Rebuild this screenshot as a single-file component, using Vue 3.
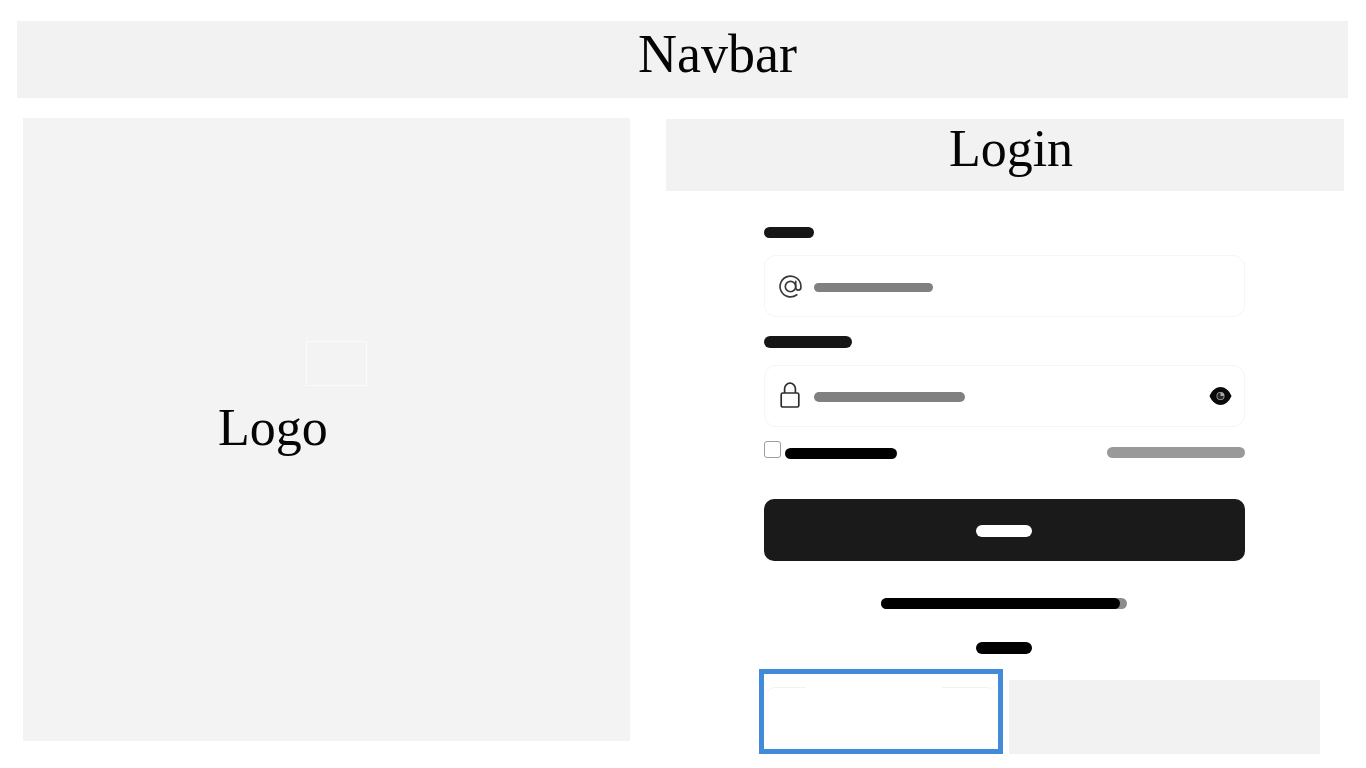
<script setup>
</script>

<template>
  <div class="page">
    <header class="navbar">Navbar</header>
    <main class="content">
      <section class="logo-panel">
        <span class="logo-text">Logo</span>
        <span class="logo-outline"></span>
      </section>
      <section class="login-col">
        <div class="login-head">Login</div>
        <form class="form" @submit.prevent>
          <div class="bar label label-a"></div>
          <div class="input">
            <svg class="icon-at" viewBox="0 0 24 24" fill="none" stroke="#3a3a3a" stroke-width="1.6" stroke-linecap="round" stroke-linejoin="round">
              <circle cx="12" cy="12" r="5" />
              <path d="M17 7v6a2.500 2.500 0 0 0 5 0v-1a10 10 0 1 0-3.920 7.940" />
            </svg>
            <div class="bar ph ph-a"></div>
          </div>
          <div class="bar label label-b"></div>
          <div class="input">
            <svg class="icon-lock" viewBox="0 0 20 26" fill="none" stroke="#2e2e2e" stroke-width="1.7" stroke-linejoin="round">
              <rect x="1.200" y="11" width="17.600" height="14" rx="1.600" />
              <path d="M4.600 11V6.600a5.400 5.400 0 0 1 10.800 0V11" />
            </svg>
            <div class="bar ph ph-b"></div>
            <svg class="icon-eye" viewBox="0 0 22 18">
              <path d="M0 9C2.500 3 7 0 11 0s8.500 3 11 9c-2.500 6-7 9-11 9S2.500 15 0 9z" fill="#0a0a0a" />
              <circle cx="11" cy="9" r="4" fill="#a8a8a8" />
              <path d="M11 5.800a3.200 3.200 0 1 0 3.200 3.200H11z" fill="#262626" />
            </svg>
          </div>
          <div class="options">
            <span class="check"></span>
            <div class="bar remember"></div>
            <div class="bar forgot"></div>
          </div>
          <button class="submit" type="submit"><span class="bar submit-text"></span></button>
          <div class="bar signup"><span class="signup-end"></span></div>
          <div class="bar or"></div>
          <div class="socials">
            <div class="selected"><div class="selected-inner"></div></div>
            <div class="placeholder"></div>
          </div>
        </form>
      </section>
    </main>
  </div>
</template>

<style>
html, body { background: #fff; overflow: hidden; }
</style>

<style scoped>
.page {
  width: 1366px;
  height: 768px;
  box-sizing: border-box;
  padding: 21px 18px 0 17px;
  background: #fff;
  font-family: "Liberation Serif", "Times New Roman", serif;
  color: #050505;
}
.navbar {
  height: 77px;
  box-sizing: border-box;
  padding: 0 0 12px 70px;
  background: #f2f2f2;
  display: flex;
  align-items: center;
  justify-content: center;
  font-size: 54px;
}
.content {
  display: flex;
  align-items: flex-start;
  gap: 36px;
  margin-top: 20px;
  padding-left: 6px;
}
.logo-panel {
  position: relative;
  flex: 0 0 607px;
  height: 623px;
  box-sizing: border-box;
  padding: 0 107px 5px 0;
  background: #f3f3f3;
  display: flex;
  align-items: center;
  justify-content: center;
  font-size: 52px;
}
.logo-outline {
  position: absolute;
  left: 283px;
  top: 223px;
  width: 61px;
  height: 45px;
  box-sizing: border-box;
  border: 1px solid #fbfbfb;
}
.login-col {
  flex: 0 0 678px;
  margin-top: 1px;
}
.login-head {
  height: 72px;
  box-sizing: border-box;
  padding: 0 0 14px 12px;
  background: #f2f2f2;
  display: flex;
  align-items: center;
  justify-content: center;
  font-size: 52px;
}
.form {
  display: flex;
  flex-direction: column;
  width: 481px;
  margin-left: 98px;
  padding-top: 36px;
}
.bar {
  border-radius: 6px;
  filter: blur(0.5px);
}
.label { background: #161616; }
.label-a { width: 50px; height: 11px; margin-bottom: 17px; }
.label-b { width: 88px; height: 12px; margin-top: 19px; margin-bottom: 17px; }
.input {
  height: 62px;
  box-sizing: border-box;
  border: 1px solid #f5f5f5;
  border-radius: 12px;
  display: flex;
  align-items: center;
  padding-left: 13px;
}
.icon-at { width: 25px; height: 25px; margin-right: 11px; filter: blur(0.3px); }
.icon-lock { width: 20px; height: 26px; margin: 0 14px 2px 2px; filter: blur(0.3px); }
.icon-eye { width: 23px; height: 18px; margin-left: auto; margin-right: 12px; filter: blur(0.3px); }
.ph { background: #808080; margin-top: 2px; }
.ph-a { width: 119px; height: 9px; }
.ph-b { width: 151px; height: 10px; }
.options {
  display: flex;
  align-items: flex-end;
  height: 18px;
  margin-top: 14px;
}
.check {
  width: 17px;
  height: 17px;
  box-sizing: border-box;
  align-self: flex-start;
  border: 1.500px solid #9c9c9c;
  border-radius: 3px;
  margin-right: 4px;
}
.remember { width: 112px; height: 11px; background: #000; }
.forgot { width: 138px; height: 11px; margin-left: auto; margin-bottom: 1px; background: #999; }
.submit {
  height: 62px;
  margin-top: 40px;
  padding: 0;
  border: 0;
  border-radius: 10px;
  background: #1a1a1a;
  display: flex;
  align-items: center;
  justify-content: center;
}
.submit-text { width: 56px; height: 12px; margin: 2px 2px 0 0; background: #fff; }
.signup {
  position: relative;
  align-self: flex-start;
  width: 246px;
  height: 11px;
  margin-top: 37px;
  margin-left: 117px;
  background: #8c8c8c;
}
.signup-end {
  position: absolute;
  left: 0;
  top: 0;
  width: 239px;
  height: 100%;
  border-radius: 6px;
  background: #000;
}
.or {
  align-self: center;
  width: 56px;
  height: 12px;
  margin: 33px 2px 0 0;
  background: #000;
}
.socials {
  display: flex;
  align-items: flex-end;
  gap: 6px;
  margin-top: 15px;
  margin-left: -5px;
  width: 561px;
}
.selected {
  flex: 0 0 244px;
  height: 85px;
  box-sizing: border-box;
  padding: 13px 0 0 3px;
  border: 5px solid #428bd8;
  overflow: hidden;
}
.selected-inner {
  position: relative;
  height: 100%;
  box-sizing: border-box;
  border-top: 1px solid #f2f2f2;
  border-radius: 8px 8px 0 0;
  margin-right: 3px;
}
.selected-inner::before {
  content: "";
  position: absolute;
  left: 39px;
  top: -1px;
  width: 136px;
  height: 1px;
  background: #fff;
}
.placeholder {
  flex: 0 0 311px;
  height: 74px;
  background: #f2f2f2;
}
</style>
